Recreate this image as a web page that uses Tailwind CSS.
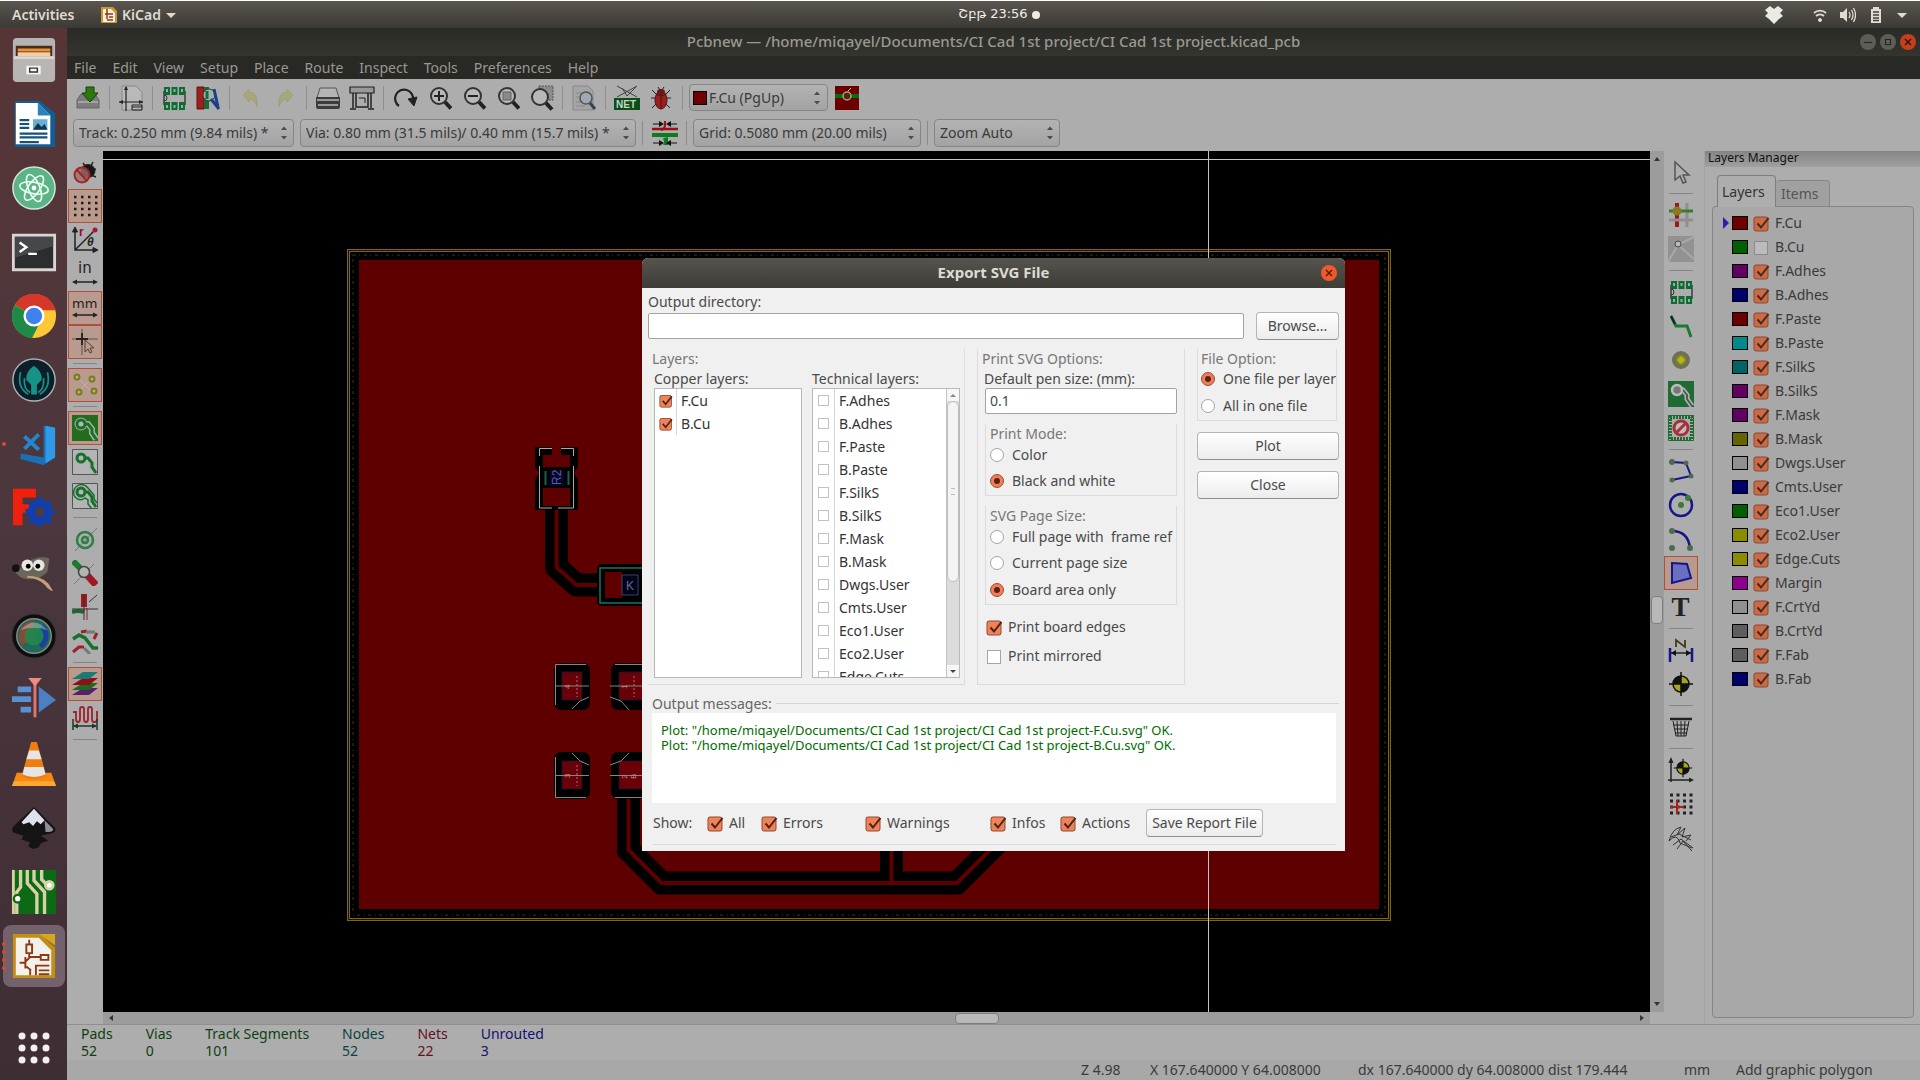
<!DOCTYPE html>
<html lang="en">
<head>
<meta charset="utf-8">
<title>Pcbnew</title>
<script src="https://cdn.jsdelivr.net/npm/@tailwindcss/browser@4"></script>
</head>
<body class="flex h-screen flex-col overflow-hidden bg-black font-['Noto_Sans','DejaVu_Sans',sans-serif] text-sm text-[#3a3a3a]">

<svg class="hidden">
  <symbol id="tick" viewBox="0 0 18 18"><rect x="1" y="3" width="14" height="14" rx="2" fill="#f0825a" stroke="#8f4a30"/><path d="M4.500 9.500l3.500 4 7.500-9.500" fill="none" stroke="#4a2415" stroke-width="2"/></symbol>
  <symbol id="tickdim" viewBox="0 0 18 18"><rect x="1" y="3" width="14" height="14" rx="2" fill="#cb6a45" stroke="#8a4a35"/><path d="M4.500 9.500l3.500 4 7.500-9.500" fill="none" stroke="#4a2a1d" stroke-width="2"/></symbol>
  <symbol id="updown" viewBox="0 0 8 16"><path d="M1 5l3-3.500 3 3.500zM1 11l3 3.500 3-3.500z" fill="#4c4c4c"/></symbol>
  <symbol id="lens" viewBox="0 0 26 26"><circle cx="11" cy="11" r="8" fill="#b8b8b8" stroke="#333" stroke-width="2"/><path d="M17 17l6 6.500" stroke="#222" stroke-width="4"/></symbol>
  <symbol id="target" viewBox="0 0 26 26"><circle cx="13" cy="13" r="8" fill="#a5a51e" stroke="#111" stroke-width="1.500"/><path d="M13 13V5a8 8 0 0 0-8 8zM13 13v8a8 8 0 0 0 8-8z" fill="#111" stroke="none"/><path d="M13 1v24M1 13h24" stroke="#111" stroke-width="1.500"/></symbol>
  <symbol id="track" viewBox="0 0 26 26"><path d="M10 9h6l4 5v4l4 6" fill="none" stroke="#17702c" stroke-width="3"/><circle cx="9" cy="9" r="4" fill="#b4b4b4" stroke="#17702c" stroke-width="3"/></symbol>
  <symbol id="chip" viewBox="0 0 26 26"><path d="M3 6v14M24 6v14" stroke="#222" stroke-width="1.200"/><path d="M3 10a3 3 0 0 1 0 6" fill="none" stroke="#333"/><g fill="#0d6b33" stroke="none"><rect x="3" y="2" width="6" height="8"/><rect x="10.500" y="2" width="6" height="8"/><rect x="18" y="2" width="6" height="8"/><rect x="3" y="17" width="6" height="8"/><rect x="10.500" y="17" width="6" height="8"/><rect x="18" y="17" width="6" height="8"/></g><g fill="#8fb49b" stroke="none"><rect x="5" y="4" width="2" height="3"/><rect x="12.500" y="4" width="2" height="3"/><rect x="20" y="4" width="2" height="3"/><rect x="5" y="20" width="2" height="3"/><rect x="12.500" y="20" width="2" height="3"/><rect x="20" y="20" width="2" height="3"/></g></symbol>
</svg>

<!-- Desktop top bar -->
<header class="grid h-7 shrink-0 grid-cols-[1fr_auto_1fr] items-center border-t border-white bg-linear-to-b from-[#5b554f] to-[#3b3a35] text-[14px] font-semibold text-[#dfdbd2]">
  <div class="flex items-center pl-3">
    <button type="button" class="w-[88px] text-left">Activities</button>
    <button type="button" class="flex items-center gap-1">
      <svg class="size-[18px]" viewBox="0 0 18 18"><path d="M1 1h12l4 4v12H1z" fill="#c9962f"/><path d="M3 3h8l4 4v9H3z" fill="#f2eee4"/><path d="M7 3v10M5 8h8M9 11h4M7 14h6" stroke="#8b3d15" stroke-width="1.500"/></svg>
      KiCad
      <svg class="size-3" viewBox="0 0 12 12"><path d="M1 4h10L6 9z" fill="#dfdbd2"/></svg>
    </button>
  </div>
  <div class="flex items-center gap-1 pl-[78px] font-['DejaVu_Sans'] text-[13px] font-normal text-[#f1efe9]">Շբթ 23:56 <span class="size-2 rounded-full bg-[#eceae4]"></span></div>
  <div class="flex items-center justify-end gap-3 pr-3">
    <svg class="mr-4 size-5" viewBox="0 0 20 20" fill="#eceae4"><path d="M6 1l4 3 4-3 5 4-3 3 3 3-4 3-5 5-5-5-4-3 3-3-3-3z"/></svg>
    <svg class="size-4" viewBox="0 0 16 16" fill="none" stroke="#dfdbd2"><path d="M2 6a9 9 0 0 1 12 0M4 9a6 6 0 0 1 8 0" stroke-width="1.800"/><circle cx="8" cy="13" r="1.500" fill="#dfdbd2"/></svg>
    <svg class="size-4" viewBox="0 0 16 16"><path d="M0 5h3l4-4v14l-4-4H0z" fill="#dfdbd2"/><path d="M9 5q2 3 0 6M11.500 3q3 5 0 10M13.500 1q4 7 0 14" fill="none" stroke="#dfdbd2" stroke-width="1.300"/></svg>
    <svg class="size-4" viewBox="0 0 16 16"><path d="M5 0h6v2h2v14H3V2h2z" fill="#dfdbd2"/><path d="M5 5h6M5 8h6M5 11h6M5 13.500h6" stroke="#44423d" stroke-width="1.300"/></svg>
    <svg class="size-3" viewBox="0 0 12 12"><path d="M1 4h10L6 9z" fill="#dfdbd2"/></svg>
  </div>
</header>

<div class="flex min-h-0 flex-1">
  <!-- Launcher dock -->
  <nav id="dock" aria-label="Launcher" class="flex w-[67px] shrink-0 flex-col bg-linear-to-b from-[#573537] via-[#4a373d] to-[#3f2d34]"></nav>

  <!-- Application window -->
  <div class="relative flex min-w-0 flex-1 flex-col bg-[#adadad]">
    <div class="grid h-7 shrink-0 grid-cols-[80px_1fr_80px] items-center bg-linear-to-b from-[#2a2a26] to-[#34352f] text-[#9b9891]">
      <h1 class="col-start-2 text-center text-[15px] font-medium">Pcbnew — /home/miqayel/Documents/CI Cad 1st project/CI Cad 1st project.kicad_pcb</h1>
      <div class="flex items-center justify-end gap-1 pr-1">
        <button type="button" aria-label="Minimize" class="flex size-4 items-center justify-center rounded-full bg-[#5d5c57]"><span class="h-px w-2 bg-[#22221f]"></span></button>
        <button type="button" aria-label="Maximize" class="flex size-4 items-center justify-center rounded-full bg-[#5d5c57]"><span class="size-[6px] border border-[#22221f]"></span></button>
        <button type="button" aria-label="Close" class="flex size-4 items-center justify-center rounded-full bg-[#c4401c]"><svg class="size-2" viewBox="0 0 8 8"><path d="M1 1l6 6M7 1L1 7" stroke="#3a1409" stroke-width="1.500"/></svg></button>
      </div>
    </div>
    <nav aria-label="Menu" class="flex h-[23px] shrink-0 items-center gap-4 bg-[#282824] pl-[7px] text-[#9b9891]">
      <button type="button">File</button><button type="button">Edit</button><button type="button">View</button><button type="button">Setup</button><button type="button">Place</button><button type="button">Route</button><button type="button">Inspect</button><button type="button">Tools</button><button type="button">Preferences</button><button type="button">Help</button>
    </nav>

    <div role="toolbar" class="flex h-[37px] shrink-0 items-center pl-1">
      <div id="topTools" class="flex items-center"></div>
      <div class="relative ml-0.5 flex h-[27px] w-[139px] items-center rounded-sm border border-[#858585] bg-linear-to-b from-[#b3b3b3] to-[#a3a3a3] pl-[3px]">
        <span class="size-[14px] border border-black bg-[#6e0000]"></span>
        <select aria-label="Active layer" class="flex-1 appearance-none pl-0.5 outline-none"><option>F.Cu (PgUp)</option></select>
        <svg class="pointer-events-none absolute right-1.5 h-4 w-2"><use href="#updown"/></svg>
      </div>
      <button type="button" aria-label="Layer pair" class="ml-[7px]"><svg class="size-6" viewBox="0 0 24 24"><path d="M0 0h24v24H0z" fill="#6a0000"/><path d="M0 10h9M15 10h9" stroke="#0b6b12" stroke-width="4"/><circle cx="12" cy="10" r="4" fill="#4a2a10" stroke="#a9a07c" stroke-width="1.500"/><path d="M13 5l3-3" stroke="#c9b98a"/></svg></button>
    </div>

    <div role="toolbar" class="flex h-[35px] shrink-0 items-center pb-0.5 pl-[6px]">
      <div class="relative h-[28px] w-[221px]"><select aria-label="Track width" class="size-full appearance-none rounded-sm border border-[#858585] bg-linear-to-b from-[#b3b3b3] to-[#a3a3a3] pl-[5px] outline-none"><option>Track: 0.250 mm (9.84 mils) *</option></select><svg class="pointer-events-none absolute top-1.5 right-1.5 h-4 w-2"><use href="#updown"/></svg></div>
      <div class="relative ml-[6px] h-[28px] w-[336px]"><select aria-label="Via size" class="size-full appearance-none rounded-sm border border-[#858585] bg-linear-to-b from-[#b3b3b3] to-[#a3a3a3] pl-[5px] outline-none"><option>Via: 0.80 mm (31.5 mils)/ 0.40 mm (15.7 mils) *</option></select><svg class="pointer-events-none absolute top-1.5 right-1.5 h-4 w-2"><use href="#updown"/></svg></div>
      <span class="mr-[5px] ml-[6px] h-6 w-px bg-[#8a8a8a]"></span>
      <button type="button" aria-label="Auto track width" class="flex w-[34px] justify-center"><svg class="size-[26px]" viewBox="0 0 26 26"><path d="M0 9h26" stroke="#9c0d14" stroke-width="2.500"/><path d="M9 10q5-1 4-9" fill="none" stroke="#9c0d14" stroke-width="2"/><path d="M0 15h26" stroke="#0b7d20" stroke-width="4"/><path d="M16 17v8h-5q2-2 0-7z" fill="#0b7d20"/><path d="M1 4h8M17 4h8M1 23h8M17 23h8" stroke="#111" stroke-width="1.200"/><path d="M7 1l5 3-5 3zM19 1l-5 3 5 3zM7 20l5 3-5 3zM19 20l-5 3 5 3z" fill="#111"/></svg></button>
      <span class="mr-[6px] ml-1 h-6 w-px bg-[#8a8a8a]"></span>
      <div class="relative h-[28px] w-[228px]"><select aria-label="Grid" class="size-full appearance-none rounded-sm border border-[#858585] bg-linear-to-b from-[#b3b3b3] to-[#a3a3a3] pl-[5px] outline-none"><option>Grid: 0.5080 mm (20.00 mils)</option></select><svg class="pointer-events-none absolute top-1.5 right-1.5 h-4 w-2"><use href="#updown"/></svg></div>
      <span class="mx-[6px] h-6 w-px bg-[#8a8a8a]"></span>
      <div class="relative h-[28px] w-[126px]"><select aria-label="Zoom" class="size-full appearance-none rounded-sm border border-[#858585] bg-linear-to-b from-[#b3b3b3] to-[#a3a3a3] pl-[5px] outline-none"><option>Zoom Auto</option></select><svg class="pointer-events-none absolute top-1.5 right-1.5 h-4 w-2"><use href="#updown"/></svg></div>
    </div>

    <div class="flex min-h-0 flex-1">
      <div id="leftTools" role="toolbar" class="flex w-9 shrink-0 flex-col items-center pt-1"></div>

      <div class="flex min-w-0 flex-1 flex-col">
        <div class="flex min-h-0 flex-1">
          <!-- Board -->
          <main class="relative min-w-0 flex-1 bg-black">
            <svg class="absolute inset-0 size-full" viewBox="103 151 1547 861" preserveAspectRatio="xMidYMid slice">
              <rect x="348.500" y="250.500" width="1041" height="669" fill="none" stroke="#806515" stroke-width="3"/>
              <rect x="348.500" y="250.500" width="1041" height="669" fill="none" stroke="#1a1200" stroke-width="1"/>
              <rect x="353" y="255" width="1032" height="660" fill="none" stroke="#231a05" stroke-width="2" stroke-dasharray="3 3 1 4"/>
              <rect x="359" y="260" width="1020" height="649" fill="#5e0000"/>
              <g fill="none" stroke="#000" stroke-width="23">
                <path d="M556.500 500v67l20 18h35" stroke-linejoin="round"/>
                <path d="M628.500 780v70l33 33H957l40-40M891.500 830v43"/>
              </g>
              <g fill="none" stroke="#5e0000" stroke-width="4">
                <path d="M556.500 500v67l20 18h35"/>
                <path d="M628.500 780v70l33 33H957l40-40M891.500 830v53"/>
              </g>
              <path d="M535 447h43v20l-4 6 4 7v30h-43v-30l4-7-4-6z" fill="#000"/>
              <path d="M543 455h27v12h-27zM543 488h27v18h-27z" fill="#5e0000"/>
              <path d="M552 447h9v12h-9z" fill="#5e0000"/>
              <path d="M539.500 456v-7.500H552M561 448.500h12.500v7.500M539.500 466v42H552M573.500 466v42H558" fill="none" stroke="#a9a9a9"/>
              <path d="M545.500 471v14M568.500 471v14" stroke="#176052" stroke-width="2"/>
              <path d="M550 470h14v16h-14z" fill="#05052e"/>
              <text transform="translate(561 485) rotate(-90)" font-size="12" fill="#56609a" font-family="Liberation Sans">R2</text>
              <rect x="597" y="564" width="60" height="42" rx="5" fill="#000"/>
              <path d="M605 572h17v26h-17z" fill="#5e0000"/>
              <path d="M657 568h-57v35h57" fill="none" stroke="#1d7260" stroke-width="1.500"/>
              <path d="M622 575h16v20h-16z" fill="#02031a" stroke="#4a5f8c" stroke-width=".7"/>
              <text transform="translate(626 590)" font-size="12" fill="#626a9c" font-family="Liberation Sans">K</text>
              <rect x="554" y="663" width="36" height="47" rx="7" fill="#000"/><path d="M562 672h20v28h-20z" fill="#6a0008" stroke="#16162c"/><path d="M555.500 705v-40.500H586M555 686h34M572 709l8-8 9-4" fill="none" stroke="#7d8a80"/><text transform="translate(570 689) rotate(-90)" font-size="8" fill="#c78a8a" font-family="Liberation Sans">4</text><path d="M577 676v21" stroke="#b07070" stroke-dasharray="2 2"/>
              <rect x="611" y="663" width="40" height="47" rx="7" fill="#000"/><path d="M619 672h25v28h-25z" fill="#6a0008" stroke="#16162c"/><path d="M615 664.500h30M610 686h35M610 697l11 4 8 9" fill="none" stroke="#7d8a80"/><text transform="translate(627 689) rotate(-90)" font-size="8" fill="#c78a8a" font-family="Liberation Sans">1</text><path d="M634 676v21" stroke="#b07070" stroke-dasharray="2 2"/>
              <rect x="554" y="752" width="36" height="47" rx="7" fill="#000"/><path d="M562 761h20v28h-20z" fill="#6a0008" stroke="#16162c"/><path d="M555.500 757v40.500H586M555 775.500h34M572 753l8 8 9 4" fill="none" stroke="#7d8a80"/><text transform="translate(570 778) rotate(-90)" font-size="8" fill="#c78a8a" font-family="Liberation Sans">3</text><path d="M577 765v21" stroke="#b07070" stroke-dasharray="2 2"/>
              <rect x="611" y="752" width="40" height="47" rx="7" fill="#000"/><path d="M619 761h25v28h-25z" fill="#6a0008" stroke="#16162c"/><path d="M615 797.500h30M610 775.500h35M610 765l11-4 8-8" fill="none" stroke="#7d8a80"/><text transform="translate(627 779) rotate(-90)" font-size="8" fill="#c78a8a" font-family="Liberation Sans">2</text><text transform="translate(636 779) rotate(-90)" font-size="8" fill="#c78a8a" font-family="Liberation Sans">B</text>
              <path d="M103 159.500h1547M1208.500 151v861" stroke="#c4c4c4"/>
            </svg>
          </main>
          <div class="flex w-[14px] flex-col items-center justify-between bg-[#9c9c9c] py-1">
            <svg class="size-2" viewBox="0 0 8 8"><path d="M1 6l3-4 3 4z" fill="#333"/></svg>
            <span class="mt-14 h-7 w-3 rounded-sm border border-[#7d7d7d] bg-[#b8b8b8]"></span>
            <svg class="size-2" viewBox="0 0 8 8"><path d="M1 2l3 4 3-4z" fill="#333"/></svg>
          </div>
        </div>
        <div class="mr-[14px] flex h-3 shrink-0 items-center justify-between bg-[#9c9c9c] px-1">
          <svg class="size-2" viewBox="0 0 8 8"><path d="M6 1L2 4l4 3z" fill="#333"/></svg>
          <span class="ml-50 h-[11px] w-11 rounded-sm border border-[#7d7d7d] bg-[#b8b8b8]"></span>
          <svg class="size-2" viewBox="0 0 8 8"><path d="M2 1l4 3-4 3z" fill="#333"/></svg>
        </div>
      </div>

      <div id="rightTools" role="toolbar" class="flex w-[34px] shrink-0 flex-col items-center pt-1"></div>

      <!-- Layers manager -->
      <aside class="ml-1.5 flex w-[216px] shrink-0 flex-col border-l border-[#a2a2a2]">
        <h2 class="h-4 bg-linear-to-b from-[#858585] to-[#a0a0a0] pl-[3px] text-[12px] leading-[14px] text-[#111]">Layers Manager</h2>
        <div role="tablist" class="flex items-end pt-2 pl-3">
          <button type="button" role="tab" aria-selected="true" class="relative z-10 -mb-px h-8 w-[59px] rounded-t-sm border border-b-0 border-[#7e7e7e] bg-[#adadad] pl-1 text-left text-[#333]">Layers</button>
          <button type="button" role="tab" aria-selected="false" class="h-[26px] w-[54px] rounded-t-sm border border-b-0 border-l-0 border-[#868686] bg-[#a0a0a0] pl-[5px] text-left text-[#555]">Items</button>
        </div>
        <ul id="layerList" class="mr-[6px] mb-[6px] ml-[7px] flex-1 rounded-sm border border-[#848484] bg-[#a8a8a8] pt-1"></ul>
      </aside>
    </div>

    <!-- Message panel and status bar -->
    <dl class="flex h-9 shrink-0 gap-[33px] border-t border-[#8f8f8f] bg-[#adadad] pl-[14px] leading-[17px] text-[#0d3f12]">
      <div><dt>Pads</dt><dd>52</dd></div>
      <div><dt>Vias</dt><dd>0</dd></div>
      <div><dt>Track Segments</dt><dd>101</dd></div>
      <div class="text-[#0d423f]"><dt>Nodes</dt><dd>52</dd></div>
      <div class="text-[#640f1d]"><dt>Nets</dt><dd>22</dd></div>
      <div class="text-[#12126e]"><dt>Unrouted</dt><dd>3</dd></div>
    </dl>
    <footer class="flex h-5 shrink-0 items-center justify-end bg-[#a8a8a8] leading-5">
      <span class="w-[69px]">Z 4.98</span>
      <span class="w-[208px]">X 167.640000 Y 64.008000</span>
      <span class="w-[326px]">dx 167.640000 dy 64.008000 dist 179.444</span>
      <span class="w-[52px]">mm</span>
      <span class="w-[184px]">Add graphic polygon</span>
    </footer>

    <!-- Export dialog -->
    <div class="absolute inset-0 z-20 flex items-center justify-center">
      <section role="dialog" aria-label="Export SVG File" class="flex w-[703px] flex-col rounded-t-md bg-[#f0f0f0] text-[#4a4a4a]">
        <div class="grid h-[30px] grid-cols-[24px_1fr_24px] items-center rounded-t-md bg-linear-to-b from-[#56544e] to-[#3d3c37]">
          <h2 class="col-start-2 text-center text-[15px] font-bold text-[#dfdbd2]">Export SVG File</h2>
          <button type="button" aria-label="Close dialog" class="flex size-4 items-center justify-center rounded-full bg-[#ee5a2c]"><svg class="size-2" viewBox="0 0 8 8"><path d="M1 1l6 6M7 1L1 7" stroke="#5a1d0b" stroke-width="1.500"/></svg></button>
        </div>
        <form class="px-[6px] pb-1.5">
          <label for="outdir" class="block pt-1 leading-5">Output directory:</label>
          <div class="flex items-center gap-3">
            <input id="outdir" type="text" class="h-[26px] min-w-0 flex-1 rounded-xs border border-[#a3a3a3] bg-white px-1 outline-none">
            <button type="button" class="h-7 w-[83px] rounded-sm border border-[#b5b5b5] border-b-[#8f8f8f] bg-linear-to-b from-white to-[#ececec]">Browse...</button>
          </div>

          <div class="mt-[9px] grid grid-cols-[317px_208px_142px] gap-x-3">
            <fieldset class="flex h-[336px] flex-col border-r border-b border-[#dcdcdc] pl-[6px]">
              <legend class="sr-only">Layers</legend>
              <div class="-ml-0.5 leading-5 text-[#777]" aria-hidden="true">Layers:</div>
              <div class="grid min-h-0 flex-1 grid-cols-[148px_148px] gap-x-[10px]">
                <div class="flex min-h-0 flex-col"><div class="leading-[19px]">Copper layers:</div>
                  <ul id="copper" class="h-[290px] overflow-hidden border border-[#b9b9b9] bg-white"></ul></div>
                <div class="flex min-h-0 flex-col"><div class="leading-[19px]">Technical layers:</div>
                  <div class="flex h-[290px] border border-[#b9b9b9] bg-white">
                    <ul id="technical" class="flex-1 overflow-hidden"></ul>
                    <div class="flex w-[13px] flex-col items-center border-l border-[#c4c4c4] bg-[#dcdcdc]">
                      <span class="flex h-3 w-full items-center justify-center bg-[#f6f6f6]"><svg class="size-2" viewBox="0 0 8 8"><path d="M1 6l3-3 3 3z" fill="#888"/></svg></span>
                      <span class="flex h-[181px] w-full items-center justify-center rounded-md border border-[#bdbdbd] bg-[#f4f4f4]"><span class="h-[7px] w-1 border-y border-[#bbb]"></span></span>
                      <span class="mt-auto flex h-3 w-full items-center justify-center bg-[#f6f6f6]"><svg class="size-2" viewBox="0 0 8 8"><path d="M1 3l3 3 3-3z" fill="#444"/></svg></span>
                    </div>
                  </div></div>
              </div>
            </fieldset>

            <fieldset class="h-[336px] border-x border-b border-[#dcdcdc] px-[7px]">
              <legend class="sr-only">Print SVG Options</legend>
              <div class="-ml-[3px] leading-5 text-[#777]" aria-hidden="true">Print SVG Options:</div>
              <label for="pen" class="-ml-px block leading-[19px] whitespace-nowrap">Default pen size: (mm):</label>
              <input id="pen" type="text" value="0.1" class="block h-[26px] w-full rounded-xs border border-[#a3a3a3] bg-white px-1 outline-none">
              <div class="mt-[10px] border-x border-b border-[#dcdcdc] pl-1" role="radiogroup" aria-label="Print Mode">
                <div class="leading-5 text-[#777]">Print Mode:</div>
                <label class="flex h-6 items-center gap-2 pb-0.5"><input data-radio type="radio" name="mode">Color</label>
                <label class="flex h-[27px] items-center gap-2"><input data-radio type="radio" name="mode" checked>Black and white</label>
              </div>
              <div class="mt-[10px] border-x border-b border-[#dcdcdc] pl-1" role="radiogroup" aria-label="SVG Page Size">
                <div class="leading-5 text-[#777]">SVG Page Size:</div>
                <label class="flex h-6 items-center gap-2 pb-0.5 whitespace-pre"><input data-radio type="radio" name="size">Full page with  frame ref</label>
                <label class="flex h-[27px] items-center gap-2"><input data-radio type="radio" name="size">Current page size</label>
                <label class="flex h-[27px] items-center gap-2"><input data-radio type="radio" name="size" checked>Board area only</label>
              </div>
              <label class="mt-2 flex h-[29px] items-center gap-1 pl-px"><input data-tick type="checkbox" checked>Print board edges</label>
              <label class="flex h-[29px] items-center gap-1 pl-px"><input data-tick type="checkbox">Print mirrored</label>
            </fieldset>

            <div>
              <div class="mr-0.5 border-x border-b border-[#dcdcdc] pl-[3px]" role="radiogroup" aria-label="File Option">
                <div class="leading-5 text-[#777]">File Option:</div>
                <label class="flex h-6 items-center gap-2 pb-1 whitespace-nowrap"><input data-radio type="radio" name="fileopt" checked>One file per layer</label>
                <label class="flex h-[27px] items-center gap-2"><input data-radio type="radio" name="fileopt">All in one file</label>
              </div>
              <button type="button" class="mt-[11px] h-7 w-full rounded-sm border border-[#b5b5b5] border-b-[#8f8f8f] bg-linear-to-b from-white to-[#ececec]">Plot</button>
              <button type="button" class="mt-[11px] h-7 w-full rounded-sm border border-[#b5b5b5] border-b-[#8f8f8f] bg-linear-to-b from-white to-[#ececec]">Close</button>
            </div>
          </div>

          <div class="mt-[10px] flex items-center gap-1 pl-1 leading-[18px] text-[#666]">Output messages:<span class="h-px flex-1 bg-[#d4d4d4]"></span></div>
          <div role="log" class="mr-[3px] ml-1 h-[90px] bg-white px-[9px] pt-2.5 text-[13px] leading-[15px] text-[#006b00]">
            <p>Plot: "/home/miqayel/Documents/CI Cad 1st project/CI Cad 1st project-F.Cu.svg" OK.</p>
            <p>Plot: "/home/miqayel/Documents/CI Cad 1st project/CI Cad 1st project-B.Cu.svg" OK.</p>
          </div>
          <div class="mr-[3px] ml-[5px] flex h-[42px] items-center border-b border-[#dcdcdc]">
            <span class="w-[54px]">Show:</span>
            <label class="flex w-[54px] items-center gap-1"><input data-tick type="checkbox" checked>All</label>
            <label class="flex w-[104px] items-center gap-1"><input data-tick type="checkbox" checked>Errors</label>
            <label class="flex w-[125px] items-center gap-1"><input data-tick type="checkbox" checked>Warnings</label>
            <label class="flex w-[70px] items-center gap-1"><input data-tick type="checkbox" checked>Infos</label>
            <label class="flex w-[86px] items-center gap-1"><input data-tick type="checkbox" checked>Actions</label>
            <button type="button" class="h-7 w-[117px] rounded-sm border border-[#b5b5b5] border-b-[#8f8f8f] bg-linear-to-b from-white to-[#ececec] whitespace-nowrap">Save Report File</button>
          </div>
        </form>
      </section>
    </div>
  </div>
</div>

<script>
const $ = id => document.getElementById(id);

/* Layers manager rows: name, colour, visible */
const layers = [['F.Cu','#6e0000',1],['B.Cu','#006000',0],['F.Adhes','#620062',1],['B.Adhes','#00006a',1],['F.Paste','#6a0000',1],['B.Paste','#008a8a',1],['F.SilkS','#006464',1],['B.SilkS','#620062',1],['F.Mask','#620062',1],['B.Mask','#646400',1],['Dwgs.User','#909090',1],['Cmts.User','#00006a',1],['Eco1.User','#006000',1],['Eco2.User','#8c8c00',1],['Edge.Cuts','#8c8c00',1],['Margin','#8c008c',1],['F.CrtYd','#909090',1],['B.CrtYd','#5e5e5e',1],['F.Fab','#5e5e5e',1],['B.Fab','#00006a',1]];
$('layerList').innerHTML = layers.map(([n, c, v], i) => `
  <li class="flex h-6 items-center pl-[9px]">
    <svg class="mr-0.5 h-3 w-2" viewBox="0 0 8 12">${i ? '' : '<path d="M1 0l6 6-6 6z" fill="#2a20b0"/>'}</svg>
    <span class="mr-[5px] h-[14px] w-4 border border-black" style="background:${c}"></span>
    <label class="flex items-center gap-1"><input data-dim type="checkbox" ${v ? 'checked' : ''}>${n}</label>
  </li>`).join('');

/* Dialog layer lists */
const row = (n, on) => `<li><label class="flex h-[23px] items-center pl-1"><input data-small type="checkbox" ${on ? 'checked' : ''}><span class="ml-[2px] h-[23px] border-l border-[#d6d6d6] pl-1 leading-[23px] text-[#333]">${n}</span></label></li>`;
$('copper').innerHTML = ['F.Cu', 'B.Cu'].map(n => row(n, true)).join('');
$('technical').innerHTML = ['F.Adhes','B.Adhes','F.Paste','B.Paste','F.SilkS','B.SilkS','F.Mask','B.Mask','Dwgs.User','Cmts.User','Eco1.User','Eco2.User','Edge.Cuts'].map(n => row(n, false)).join('');

/* Check boxes and radio buttons */
const dress = (sel, box, input, mark) => document.querySelectorAll(sel).forEach(el => {
  const s = document.createElement('span');
  s.className = box; el.before(s); el.className = input; s.append(el);
  s.insertAdjacentHTML('beforeend', mark);
});
dress('[data-tick]', 'relative size-[18px] shrink-0', 'peer absolute top-[3px] left-px size-[14px] appearance-none border border-[#a5a5a5] bg-white', '<svg class="pointer-events-none absolute inset-0 hidden size-[18px] peer-checked:block"><use href="#tick"/></svg>');
dress('[data-dim]', 'relative size-[18px] shrink-0', 'peer absolute top-[3px] left-px size-[14px] appearance-none border border-[#8a8a8a] bg-[#bcbcbc]', '<svg class="pointer-events-none absolute inset-0 hidden size-[18px] peer-checked:block"><use href="#tickdim"/></svg>');
dress('[data-small]', 'relative size-[15px] shrink-0', 'peer absolute top-[2px] left-px size-[11px] appearance-none border border-[#c2c2c2] bg-white', '<svg class="pointer-events-none absolute inset-0 hidden size-[15px] peer-checked:block"><use href="#tick"/></svg>');
dress('[data-radio]', 'relative size-[14px] shrink-0', 'peer absolute inset-0 size-[14px] appearance-none rounded-full border border-[#a5a5a5] bg-white checked:border-[#a04a2c] checked:bg-[#ee7f5a]', '<span class="pointer-events-none absolute top-[4px] left-[4px] hidden size-[6px] rounded-full bg-[#5a2010] peer-checked:block"></span>');

/* Tool buttons */
const S = null;
const svg = b => `<svg class="size-[26px]" viewBox="0 0 26 26" fill="none" stroke="#222">${b}</svg>`;
const lens = x => `<g transform="translate(2 0)"><use href="#lens" width="26" height="26"/>${x}</g>`;
const top1 = [
 ['Save','<path d="M2 15l4-6h14l4 6v8H2z" fill="#7d7d7d" stroke="#666"/><path d="M3 17h20" stroke="#ccc"/><path d="M11 2h8v6h4l-8 9-8-9h4z" fill="#2c7a0b" stroke="#163f05"/>'],S,
 ['Page settings','<path d="M4 1h14l6 6v18H4z" fill="#b9b9b9" stroke="#888"/><path d="M8 2v24M1 17h24" stroke-width="1.200"/><path d="M8 1l-2 4h4zM1 17l4-2v4zM25 17l-4-2v4z" fill="#222" stroke="none"/><path d="M14 20h10v5H14zM14 22h10" />'],S,
 ['Footprint editor','<use href="#chip"/>'],
 ['Footprint browser','<path d="M2 2h7v22H2z" fill="#a01d1d" stroke="#611"/><path d="M9 2h5v22H9z" fill="#176a3a" stroke="none"/><circle cx="14" cy="10" r="6" fill="#9fb4a4" stroke="#333"/><path d="M12 6v8" stroke="#176a3a" stroke-width="3"/><path d="M19 4l4 18M16 14l8 10" stroke="#1c3f8a" stroke-width="3"/>'],S,
 ['Undo','<path d="M5 10l6-6v3q9 0 8 15-2-8-8-8v3z" fill="#a8a77c" stroke="#a09f70"/>'],
 ['Redo','<path d="M21 10l-6-6v3q-9 0-8 15 2-8 8-8v3z" fill="#9fab7c" stroke="#95a372"/>'],S,
 ['Print','<path d="M5 3h16l3 10H2z" fill="#b5b5b5" stroke="#555"/><path d="M1 12h24v10q0 2-2 2H3q-2 0-2-2z" fill="#3c3c3c" stroke="none"/><path d="M2 15h22M3 20h20" stroke="#999" stroke-width="2"/>'],
 ['Plot','<path d="M1 2h24v6H1z" fill="#999" stroke-width="1.200"/><path d="M4 8v15M22 8v15M7 8v14h12V8M1 24h6M19 24h6" stroke-width="1.500"/><path d="M10 13h6v5"/>'],S,
 ['Refresh','<path d="M7 21A9 9 0 1 1 21 15" stroke-width="2.200"/><path d="M16 14l9-2-3 9z" fill="#222"/>'],
 ['Zoom in',lens('<path d="M6 11h10M11 6v10" stroke-width="2"/>')],
 ['Zoom out',lens('<path d="M6 11h10" stroke-width="2"/>')],
 ['Zoom fit',lens('<path d="M7 7h8v8H7z" fill="#8a8a8a" stroke="#666"/>')],
 ['Zoom selection','<path d="M11 1h14v14H11z" fill="#8c8c8c" stroke="#555" stroke-dasharray="2 1"/><use href="#lens" x="1" y="1" width="26" height="26"/>'],S,
 ['Find','<path d="M2 1h15l5 5v19H2z" fill="#a5a5a5" stroke="#888"/><path d="M5 8h12M5 12h5M5 17h5M5 21h9" stroke="#888"/><circle cx="15" cy="13" r="6" fill="#9fa8b4" stroke="#555" stroke-width="1.500"/><path d="M19 18l5 6" stroke="#345" stroke-width="3"/>'],S,
 ['Netlist','<path d="M3 1l20 11M23 1L3 12M8 3l5 8 9-9" stroke="#444"/><path d="M0 13h26v12H0z" fill="#0c4d18" stroke="none"/><text x="2" y="23" font-size="10" font-weight="bold" fill="#c5d5c5" stroke="none" font-family="Liberation Sans">NET</text>'],
 ['Design rules','<path d="M4 5l5 5M22 5l-5 5M3 13h20M4 23l5-5M22 23l-5-5M10 2l2 3M16 2l-2 3"/><ellipse cx="13" cy="15" rx="6" ry="9" fill="#9a2020" stroke="#511"/><path d="M8 9q5 4 10 0M13 10v14" stroke="#511"/><ellipse cx="13" cy="7" rx="4" ry="3" fill="#6a1818" stroke="none"/>'],S,
];
const zone = '<path d="M.500 .500h25v25H.500z" fill="#b4b4b4" stroke="#555"/>';
const left1 = [
 ['Disable design rules','<path d="M11 4l3 4M21 3l-2 4M24 10l-4 1M24 18l-5-2" stroke-width="1.500"/><ellipse cx="16" cy="12" rx="7" ry="6.500" fill="#161616"/><circle cx="10" cy="16" r="7.500" fill="#9a7070" fill-opacity=".8" stroke="#a52424" stroke-width="2"/><path d="M5 11l10 11" stroke="#a52424" stroke-width="2"/>'],
 ['Grid','<g stroke="#2a1a14" stroke-width="2.500" stroke-dasharray="2.500 4.500"><path d="M2 4h24M2 10h24M2 16h24M2 22h24"/></g>',1],
 ['Polar coordinates','<path d="M3 2v21h22M3 23L22 4" stroke-width="1.500"/><path d="M3 0l-2.500 5h5zM26 23l-5-2.500v5z" fill="#222"/><circle cx="23" cy="3" r="2.500" fill="#b0123a" stroke="none"/><text x="7" y="9" font-size="12" font-weight="bold" fill="#8c1030" stroke="none" font-family="Liberation Sans">r</text><text x="15" y="19" font-size="12" font-style="italic" font-weight="bold" fill="#222" stroke="none" font-family="Liberation Sans">θ</text>'],
 ['Inches','<text x="6" y="12" font-size="15" fill="#222" stroke="none" font-family="DejaVu Sans">in</text><path d="M2 21h22" stroke-width="1.500"/><path d="M0 21l5-2.500v5zM26 21l-5-2.500v5z" fill="#222" stroke="none"/>'],
 ['Millimetres','<text x="0" y="13" font-size="13" fill="#222" stroke="none" font-family="DejaVu Sans">mm</text><path d="M2 20h22" stroke-width="1.500"/><path d="M0 20l5-2.500v5zM26 20l-5-2.500v5z" fill="#222" stroke="none"/>',1],
 ['Cursor shape','<path d="M10 0v26M0 10h26" stroke="#555"/><path d="M10 4v12M4 10h12" stroke-width="1.800"/><path d="M13 11v12l3-3 2 4 2-1-2-4h4z" fill="#b89a8e" stroke="#5a4038"/>',1],S,
 ['Ratsnest','<path d="M6 6l14 14M20 6L6 20" stroke="#b9b3a4"/><g fill="#b4b08a" stroke="#7b7b1e" stroke-width="2"><circle cx="5" cy="5" r="2.500"/><circle cx="20" cy="7" r="2.500"/><circle cx="7" cy="20" r="2.500"/><circle cx="22" cy="19" r="2.500"/></g>',1],S,
 ['Filled zones','<path d="M0 0h26v26H0z" fill="#256b1e" stroke="none"/><path d="M10 9h6l4 5v4l4 6" stroke="#a5b39d" stroke-width="6"/><circle cx="9" cy="9" r="6.500" fill="#a5b39d" stroke="none"/><use href="#track"/>',1],
 ['Hidden zones',zone+'<use href="#track"/>'],
 ['Zone outlines',zone+'<path d="M3 14a7.500 7.500 0 1 1 13-9l6 7v4l3 4M3 14q5 5 10 1l3 2v4l4 5" stroke="#17702c" stroke-width="1.500"/><use href="#track"/>'],S,
 ['Pads sketch','<path d="M3 25L25 2" stroke="#777"/><circle cx="13" cy="14" r="8" stroke="#2b7f45" stroke-width="2.500"/><circle cx="13" cy="14" r="3" stroke="#2b7f45" stroke-width="2.500"/>'],
 ['Vias sketch','<path d="M1 1l8 8" stroke="#1b7a2b" stroke-width="6"/><path d="M15 15l9 10" stroke="#a01822" stroke-width="7"/><path d="M2 24L22 4" stroke="#777"/><circle cx="12" cy="12" r="5.500" fill="#b4b4b4" stroke="#444" stroke-width="1.500"/>'],
 ['Tracks sketch','<path d="M9 0h6v13H9z" fill="#a01822" stroke="none"/><path d="M0 18q6-2 12 0" stroke="#1b6a2b" stroke-width="4"/><path d="M12 0v26M0 15h26M17 8l8-7" stroke="#333"/><path d="M15 14v12" stroke="#a01822"/>'],
 ['High contrast','<path d="M1 11l6-4 6 3 4 5 4 5h5" stroke="#17702c" stroke-width="3.500"/><path d="M9 4l6-1M1 24l6-5h5M22 11l3-6" stroke="#99232b" stroke-width="3"/><path d="M14 4h9M12 20l6 6" stroke="#777" stroke-width="3"/>'],S,
 ['Layers','<path d="M0 24l11-7h15l-9 7z" fill="#5a1e6a" stroke="none"/><path d="M0 19l11-7h15l-9 7z" fill="#1c6a22" stroke="none"/><path d="M0 14l11-7h15l-9 7z" fill="#8c1018" stroke="none"/><path d="M0 8l11-7h15l-9 7z" fill="#1b7a74" stroke="none"/>',1],
 ['Length tuning','<path d="M1 7h3v7q0 3 2 3t2-3V4q0-2 2-2t2 2v10q0 3 2 3t2-3V4q0-2 2-2t2 2v10q0 3 2 3h1q2 0 2-3V7h3" stroke="#a0202c" stroke-width="1.800"/><path d="M1 14v11M25 14v11M2 21h22" stroke="#163a28" stroke-width="1.500"/><path d="M1 21l5-2.500v5zM25 21l-5-2.500v5z" fill="#163a28" stroke="none"/>'],S,
];
const right1 = [
 ['Select','<path d="M7 3v18l5-4 3 7 3-1-3-7h6z" fill="#b0b0b0" stroke="#555" stroke-width="1.500"/>'],S,
 ['Highlight net','<path d="M9 1v24" stroke="#a0141c" stroke-width="4"/><path d="M19 1v24M1 18h24" stroke="#8f8f8f" stroke-width="3"/><path d="M1 9h24" stroke="#3a7a2c" stroke-width="3"/><circle cx="9" cy="9" r="4.500" fill="#8a7a1e" stroke="none"/>'],
 ['Local ratsnest','<path d="M0 0h26v26H0z" fill="#929292" stroke="none"/><path d="M0 26L10 9l16 14M10 9L26 1" stroke="#a9a9a9" stroke-width="2"/><circle cx="10" cy="8" r="3" fill="#bbb" stroke="#444"/>'],S,
 ['Add footprint','<use href="#chip"/>'],
 ['Route track','<path d="M3 3l5 10h11l4 11" stroke="#1b7a2b" stroke-width="3"/><path d="M3 3l4 8" stroke="#123" stroke-width="2"/>'],
 ['Add via','<circle cx="13" cy="13" r="7" fill="#8c8c1a" stroke="#6f6f55" stroke-width="4"/><path d="M13 9l4 4-4 4-4-4z" fill="#b5b51e" stroke="none"/>'],
 ['Add zone','<path d="M0 0h26v26H0z" fill="#1e6b33" stroke="none"/><path d="M10 9h5l4 5v4l5 7" stroke="#b4b4b4" stroke-width="5"/><path d="M10 9h5l4 5v4l5 7" stroke="#555" stroke-width="2"/><circle cx="9" cy="9" r="5" fill="#777" stroke="#bbb" stroke-width="2.500"/>'],
 ['Add keepout','<path d="M2 2h22v22H2z" stroke="#1e6b33" stroke-width="4" stroke-dasharray="2 1"/><path d="M.500 .500h25v25H.500z" stroke="#1e6b33"/><circle cx="13" cy="13" r="7" fill="#bdbdbd" stroke="#a8303a" stroke-width="3"/><path d="M18 8L8 18" stroke="#a8303a" stroke-width="3"/>'],S,
 ['Add line','<path d="M4 4l14 1 5 13L4 22" stroke="#16168a" stroke-width="2"/><g fill="#4c6a4c" stroke="none"><circle cx="4" cy="4" r="3"/><circle cx="18" cy="5" r="2.500"/><circle cx="23" cy="18" r="2.500"/><circle cx="4" cy="22" r="2.500"/></g>'],
 ['Add circle','<circle cx="13" cy="13" r="11" stroke="#16168a" stroke-width="2.500"/><circle cx="13" cy="13" r="3" fill="#3a7a3a" stroke="none"/><circle cx="20" cy="6" r="3" fill="#3a7a3a" stroke="none"/>'],
 ['Add arc','<path d="M4 5q16 0 18 17" stroke="#16168a" stroke-width="2.500"/><g fill="#4c6a4c" stroke="none"><circle cx="4" cy="5" r="3"/><circle cx="4" cy="22" r="3"/><circle cx="22" cy="22" r="3"/></g>'],
 ['Add polygon','<path d="M4 3l15 1 4 14L4 23z" fill="#6a70c0" stroke="#16168a" stroke-width="2"/>',1],
 ['Add text','<text x="3.500" y="22" font-size="27" font-weight="bold" fill="#222" stroke="none" font-family="Liberation Serif">T</text>'],S,
 ['Add dimension','<path d="M2 11v14M24 11v14" stroke="#16168a" stroke-width="2.500"/><path d="M3 16h20" stroke-width="1.500"/><path d="M3 16l5-3v6zM23 16l-5-3v6z" fill="#111" stroke="none"/><path d="M8 10V3l9 7V3" stroke="#3a3f18" stroke-width="1.800"/>'],
 ['Add target','<use href="#target"/>'],S,
 ['Delete','<path d="M2 5h22" stroke-width="2.500"/><path d="M5 7l3 15h10l3-15M9 7l1 15M13 7v15M17 7l-1 15M5 11h16M6 15h14M7 19h12"/>'],S,
 ['Drill origin','<path d="M3 3v22M0 23h24" stroke-width="1.500"/><path d="M3 0L.500 6h5zM26 23l-5-2.500v5z" fill="#222" stroke="none"/><use href="#target" x="5" y="1" width="20" height="20"/>'],
 ['Grid origin','<g stroke="#222" stroke-width="3" stroke-dasharray="3 3.500"><path d="M2 4h24M2 10h24M2 16h24M2 22h24"/></g><path d="M9 9v14M2 16h14" stroke="#a82020" stroke-width="2"/>'],
 ['Microwave tools','<path d="M1 16Q4 4 13 2l-4 8 8-7-3 9 9-2-5 6M1 16q8-9 11 2l12 5M5 20l8-6 12 9M3 12l8-3 12 6M9 24l6-8 9 10" stroke="#333"/>'],
];
const tools = (id, list, sep) => $(id).innerHTML = list.map(t => t
  ? `<button type="button" aria-label="${t[0]}" class="flex size-[34px] shrink-0 items-center justify-center border ${t[2] ? 'border-[#b0503c] bg-[#b89a8e]' : 'border-transparent'}">${svg(t[1])}</button>` : sep).join('');
tools('topTools', top1, '<span class="mx-1 h-6 w-px bg-[#8f8f8f]"></span>');
tools('leftTools', left1, '<span class="my-1 h-px w-6 shrink-0 bg-[#858585]"></span>');
tools('rightTools', right1, '<span class="my-1 h-px w-6 shrink-0 bg-[#858585]"></span>');

/* Launcher */
const apps = [
 ['Files','<rect x="2" y="1" width="44" height="46" rx="4" fill="#b4b4b4"/><path d="M5 9h38v12H5z" fill="#4a2b18"/><path d="M7 12h34v3H7z" fill="#e8933c"/><path d="M7 16h34v4H7z" fill="#f3cfa0"/><path d="M3 20h42v24q0 2-2 2H5q-2 0-2-2z" fill="#b9b5b2"/><path d="M3 20h42v3H3z" fill="#d9d6d4"/><rect x="16" y="30" width="15" height="9" fill="#f4f4f4"/><path d="M19.500 32.500h8v4h-8z" fill="none" stroke="#333" stroke-width="1.500"/>'],
 ['Writer','<path d="M4 0h26l16 13v35H4z" fill="#0f5f96"/><path d="M5 2h23l13 13v30H5z" fill="#fff"/><path d="M28 2v13h13z" fill="#2c82bb"/><path d="M9 20h10M9 24h10M9 28h10M9 34h29M9 38h29M9 43h20" stroke="#13527c" stroke-width="2.300"/><path d="M23 19h15v11H23z" fill="#67aeda"/><path d="M23 30l5-7 4 4 3-3 3 6z" fill="#12384f"/>'],
 ['Atom','<circle cx="24" cy="24" r="22" fill="#5cb486" stroke="#d5e8dc" stroke-width="1.500"/><g fill="none" stroke="#e9fff2" stroke-width="1.700"><ellipse cx="24" cy="24" rx="15" ry="6" transform="rotate(10 24 24)"/><ellipse cx="24" cy="24" rx="15" ry="6" transform="rotate(68 24 24)"/><ellipse cx="24" cy="24" rx="15" ry="6" transform="rotate(125 24 24)"/></g><circle cx="24" cy="24" r="2.500" fill="#fff"/>'],
 ['Terminal','<path d="M1 5h46v39H1z" fill="#d8d5d2"/><path d="M4 8h40v33H4z" fill="#2b2d2e"/><path d="M4 8h40v10L4 30z" fill="#45484a"/><path d="M9 14l7 5-7 5M18 26h9" fill="none" stroke="#fff" stroke-width="2.500"/>'],
 ['Chrome','<circle cx="24" cy="24" r="23" fill="#fcc934"/><path d="M24 24L4 12.500A23 23 0 0 1 44 12.500L47 18H24z" fill="#d5382b"/><path d="M4 12.500A23 23 0 0 0 22 47l8-16-6-7z" fill="#1f8a48"/><circle cx="24" cy="24" r="11" fill="#fff"/><circle cx="24" cy="24" r="8.500" fill="#3f82ee"/>'],
 ['GitKraken','<circle cx="24" cy="24" r="22" fill="#0c1e28" stroke="#a9b2b8" stroke-width="1.500"/><path d="M24 9q-9 6-8 15l5 5v10h6V29l5-5q1-9-8-15z" fill="#179287"/><path d="M10 16q-4 16 8 23M38 16q4 16-8 23M14 22q-1 12 6 15M34 22q1 12-6 15" fill="none" stroke="#179287" stroke-width="1.800"/>'],
 ['Visual Studio Code','<path d="M10 34l24 4V5l12 2v31l-12 8-24-6z" fill="#1b6fb4"/><path d="M36 5l10 2v31l-10 6z" fill="#2f9be8"/><path d="M14 16l15 14M29 14L14 29" stroke="#2384cf" stroke-width="4"/>',1],
 ['FreeCAD','<path d="M2 4h24v9H12v7h10v9H12v13H2z" fill="#f0200f"/><g stroke="#123fae" stroke-width="6"><path d="M30 13v30M15 28h30M20 18l21 21M41 18L20 39"/></g><circle cx="30" cy="28" r="9" fill="none" stroke="#123fae" stroke-width="7"/><circle cx="30" cy="28" r="5" fill="#4c3a40"/>'],
 ['GIMP','<path d="M2 16q8 8 14-2 14-8 24-4l-2 14q-10 10-24 7Q4 29 2 16z" fill="#6b665a"/><circle cx="17" cy="17" r="6" fill="#e8e6e0"/><circle cx="29" cy="17" r="6" fill="#e8e6e0"/><circle cx="18" cy="18" r="2.500"/><circle cx="28" cy="18" r="2.500"/><circle cx="5" cy="20" r="4" fill="#111"/><path d="M17 28q14 0 22 8l5 8q-6-2-8-6-8-8-19-8z" fill="#c4a07a"/>'],
 ['Camera','<circle cx="24" cy="24" r="23" fill="#0e0e0e" stroke="#333"/><circle cx="24" cy="24" r="18" fill="#1f6a58" stroke="#888" stroke-width="1.500"/><path d="M24 8a16 16 0 0 0-12 26l12-10z" fill="#8a4a38"/><path d="M34 12a16 16 0 0 1-2 25l-8-13z" fill="#1c3f9c"/><circle cx="24" cy="24" r="10" fill="#1f8a4c" fill-opacity=".9"/><path d="M10 18q14-16 28 0-14-5-28 0z" fill="#cfe3dc" fill-opacity=".4"/>'],
 ['Aligner','<path d="M7 10h14v6H7zM1 20h20v6H1zM10 31h11v6H10z" fill="#5a8fd0"/><path d="M29 10l18 14-18 13z" fill="#4a80c4"/><path d="M25 4v38" stroke="#e2766a" stroke-width="3"/><path d="M18 1h14l-7 9z" fill="#f08a80"/>'],
 ['VLC','<path d="M6 33h36l5 14H1z" fill="#f58a12"/><path d="M21 1h6l10 36q-13 6-26 0z" fill="#f07d0c"/><path d="M19 10h10l3 9H16zM14 27h20l2 8q-12 5-24 0z" fill="#e5e5e5"/><path d="M1 47l2-5h42l2 5z" fill="#ffa733"/>'],
 ['Inkscape','<path d="M24 2L46 24q2 5-6 6l-9 2 8 5-8 3-2 4-6 2-5-3 2-4-9-3 2-4-10-3q-4-3 0-7z" fill="#141414"/><path d="M24 4l11 12-4 4-4-3-4 5-4-4-6 2-2-2z" fill="#dfe2ea"/><path d="M35 16l9 9q0 4-8 3z" fill="#8d8f99"/>'],
 ['Pcbnew','<path d="M1 1h46v46H1z" fill="#0c6a14"/><path d="M10 1v18l-4 5v23M17 1v14l10 11v21M24 1v11l11 12v23M32 1v10l6 6" fill="none" stroke="#d8d0a8" stroke-width="3.500"/><path d="M1 1h3v46H1z" fill="#d8d0a8"/><circle cx="7" cy="31" r="4" fill="#fff" stroke="#0c6a14" stroke-width="2.500"/><circle cx="40" cy="17" r="4" fill="#fff" stroke="#d8d0a8" stroke-width="3"/>'],
 ['KiCad','<path d="M2 1h28l16 14v32H2z" fill="#c18f13"/><path d="M5 5h24l13 13v26H5z" fill="#f4f1ec"/><path d="M29 1h17v12z" fill="#d8a51e"/><g fill="none" stroke="#8b3a14" stroke-width="2"><path d="M19 7v5M16 12h6v9h-6zM19 21v5M9 31h6M15 25v12M15 30l5-5h11M31 23h8v5h-8zM16 35l5 4M20 44v-6M26 44V34h14M29 39h11M29 43h11"/></g>',4],
];
const dot = '<span class="size-1 rounded-full bg-[#d8492f]"></span>';
$('dock').innerHTML = apps.map(([n, b, d]) => `
  <button type="button" aria-label="${n}" class="relative flex h-16 w-full shrink-0 items-center justify-center">
    <span class="flex size-[62px] items-center justify-center rounded-lg ${d === 4 ? 'bg-[#73626b]' : ''}"><svg class="size-[46px]" viewBox="0 0 48 48">${b}</svg></span>
    <span class="absolute left-0.5 flex flex-col gap-1">${dot.repeat(d || 0)}</span>
  </button>`).join('') + `
  <button type="button" aria-label="Show applications" class="mt-auto flex h-16 shrink-0 items-center justify-center"><svg class="size-8" viewBox="0 0 32 32" fill="#f2f0f0"><circle cx="4" cy="4" r="3.500"/><circle cx="16" cy="4" r="3.500"/><circle cx="28" cy="4" r="3.500"/><circle cx="4" cy="16" r="3.500"/><circle cx="16" cy="16" r="3.500"/><circle cx="28" cy="16" r="3.500"/><circle cx="4" cy="28" r="3.500"/><circle cx="16" cy="28" r="3.500"/><circle cx="28" cy="28" r="3.500"/></svg></button>`;
</script>
</body>
</html>
